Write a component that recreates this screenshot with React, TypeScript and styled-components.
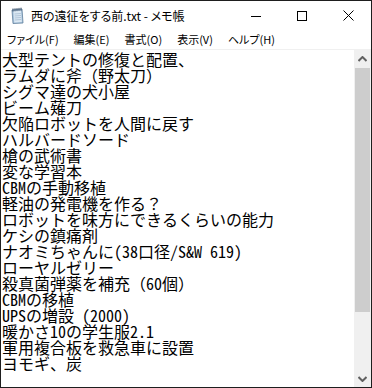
import styled, { createGlobalStyle } from 'styled-components';

const lines = [
  '大型テントの修復と配置、',
  'ラムダに斧（野太刀）',
  'シグマ達の犬小屋',
  'ビーム薙刀',
  '欠陥ロボットを人間に戻す',
  'ハルバードソード',
  '槍の武術書',
  '変な学習本',
  'CBMの手動移植',
  '軽油の発電機を作る？',
  'ロボットを味方にできるくらいの能力',
  'ケシの鎮痛剤',
  'ナオミちゃんに(38口径/S&W 619)',
  'ローヤルゼリー',
  '殺真菌弾薬を補充（60個）',
  'CBMの移植',
  'UPSの増設 (2000)',
  '暖かさ10の学生服2.1',
  '軍用複合板を救急車に設置',
  'ヨモギ、炭',
];

const menus = ['ファイル(F)', '編集(E)', '書式(O)', '表示(V)', 'ヘルプ(H)'];

const GlobalStyle = createGlobalStyle`
  html, body {
    margin: 0;
    padding: 0;
    background: #ffffff;
  }
`;

function NotepadIcon() {
  return (
    <svg width="16" height="17" viewBox="0 0 16 17">
      <path d="M3 3 L13 2 L14 16 L4 16.5 Z" fill="#a9c4dc" stroke="#5f7f9c" strokeWidth="0.8" />
      <path d="M4.5 4 L12 3.3 L12.8 15 L5.3 15.4 Z" fill="#dbe8f3" />
      <path d="M5.5 7 L11.8 6.5 M5.6 9 L12 8.5 M5.7 11 L12.1 10.5 M5.8 13 L12.2 12.5" stroke="#9db5cb" strokeWidth="0.7" />
      <path d="M4 1.5 v3 M6 1.3 v3 M8 1.1 v3 M10 0.9 v3 M12 0.7 v3" stroke="#3d5068" strokeWidth="1" />
    </svg>
  );
}

function Chevron({ up }: { up?: boolean }) {
  return (
    <svg width="9" height="6" viewBox="0 0 9 6">
      <path
        d={up ? 'M0.5 5 L4.5 1 L8.5 5' : 'M0.5 1 L4.5 5 L8.5 1'}
        fill="none"
        stroke="#606060"
        strokeWidth="2"
      />
    </svg>
  );
}

export default function App() {
  return (
    <>
      <GlobalStyle />
      <Window>
        <TitleBar>
          <TitleLeft>
            <NotepadIcon />
            <TitleText>西の遠征をする前.txt - メモ帳</TitleText>
          </TitleLeft>
          <Controls>
            <CtrlButton>
              <svg width="10" height="10" viewBox="0 0 10 10">
                <path d="M0 5.5 H10" stroke="#000" strokeWidth="1" />
              </svg>
            </CtrlButton>
            <CtrlButton>
              <svg width="10" height="10" viewBox="0 0 10 10">
                <rect x="0.5" y="0.5" width="9" height="9" fill="none" stroke="#000" strokeWidth="1" />
              </svg>
            </CtrlButton>
            <CtrlButton>
              <svg width="11" height="11" viewBox="0 0 11 11">
                <path d="M0.5 0.5 L10.5 10.5 M10.5 0.5 L0.5 10.5" stroke="#000" strokeWidth="1" />
              </svg>
            </CtrlButton>
          </Controls>
        </TitleBar>
        <MenuBar>
          {menus.map((m) => (
            <MenuItem key={m}>{m}</MenuItem>
          ))}
        </MenuBar>
        <EditArea>
          <TextPane>
            {lines.map((l, i) => (
              <Line key={i}>{l}</Line>
            ))}
          </TextPane>
          <ScrollBar>
            <ArrowBox>
              <Chevron up />
            </ArrowBox>
            <Track>
              <Thumb />
            </Track>
            <ArrowBox>
              <Chevron />
            </ArrowBox>
          </ScrollBar>
        </EditArea>
      </Window>
    </>
  );
}

const Window = styled.div`
  width: 372px;
  height: 388px;
  box-sizing: border-box;
  border: 1px solid #1e1e1e;
  background: #ffffff;
  display: flex;
  flex-direction: column;
  overflow: hidden;
  font-family: 'Noto Sans CJK JP', 'Noto Sans', sans-serif;
`;

const TitleBar = styled.div`
  height: 29px;
  display: flex;
  align-items: center;
  justify-content: space-between;
  flex-shrink: 0;
`;

const TitleLeft = styled.div`
  display: flex;
  align-items: center;
  gap: 6px;
  padding-left: 8px;
`;

const TitleText = styled.span`
  font-size: 12px;
  color: #000000;
  font-feature-settings: 'palt';
  line-height: 16px;
`;

const Controls = styled.div`
  display: flex;
  height: 100%;
`;

const CtrlButton = styled.div`
  width: 46px;
  height: 100%;
  display: flex;
  align-items: center;
  justify-content: center;
`;

const MenuBar = styled.div`
  height: 19px;
  display: flex;
  align-items: center;
  flex-shrink: 0;
  border-bottom: 1px solid #f0f0f0;
`;

const MenuItem = styled.span`
  padding: 0 8px 0 6px;
  margin-right: 1px;
  font-size: 11px;
  color: #000000;
  font-feature-settings: 'palt';
  line-height: 19px;
`;

const EditArea = styled.div`
  flex: 1;
  display: flex;
  min-height: 0;
`;

const TextPane = styled.div`
  flex: 1;
  padding: 1px 0 0 1px;
  overflow: hidden;
  font-family: 'Noto Sans Mono CJK JP', 'Noto Sans CJK JP', monospace;
  font-size: 16px;
  color: #000000;
`;

const Line = styled.div`
  height: 16px;
  line-height: 16px;
  white-space: pre;
`;

const ScrollBar = styled.div`
  width: 17px;
  background: #f0f0f0;
  display: flex;
  flex-direction: column;
`;

const ArrowBox = styled.div`
  height: 17px;
  display: flex;
  align-items: center;
  justify-content: center;
  flex-shrink: 0;
`;

const Track = styled.div`
  flex: 1;
  padding-top: 1px;
  display: flex;
  flex-direction: column;
`;

const Thumb = styled.div`
  height: 244px;
  margin: 0 1px;
  background: #cdcdcd;
`;
